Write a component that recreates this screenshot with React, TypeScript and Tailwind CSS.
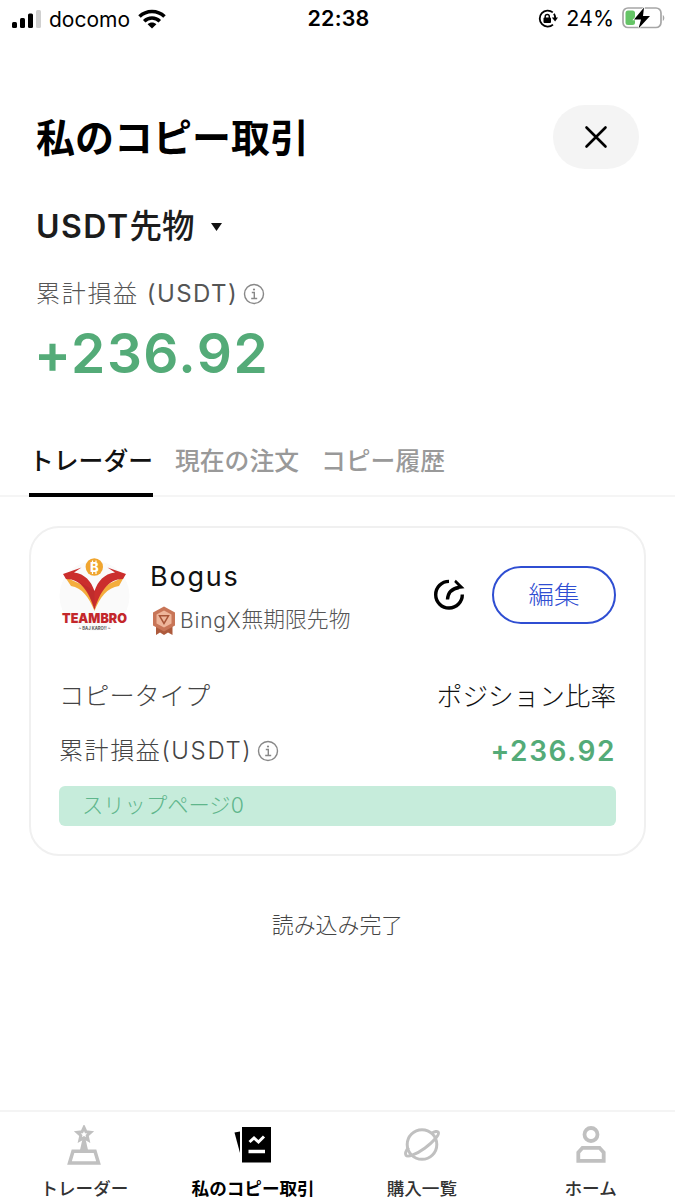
import type { ReactNode } from 'react';

const navItems = [
  { label: 'トレーダー', icon: TrophyIcon, active: false },
  { label: '私のコピー取引', icon: CardsIcon, active: true },
  { label: '購入一覧', icon: PlanetIcon, active: false },
  { label: 'ホーム', icon: UserIcon, active: false },
];

export default function App() {
  return (
    <div className="flex h-[1200px] w-[675px] flex-col overflow-hidden bg-white font-['Inter','Noto_Sans_CJK_JP',sans-serif] whitespace-nowrap text-[#111]">
      <StatusBar />

      <header className="mt-[67px] flex h-16 items-center justify-between pr-9 pl-9">
        <h1 className="text-[39px] leading-none font-bold text-black">私のコピー取引</h1>
        <button className="flex h-16 w-[86px] items-center justify-center rounded-full bg-[#f4f4f4]">
          <svg width="24" height="24" viewBox="0 0 24 24" stroke="#000" strokeWidth="2.6" strokeLinecap="round">
            <path d="M2.5 2.5 21.5 21.5M21.5 2.5 2.5 21.5" />
          </svg>
        </button>
      </header>

      <section className="px-9">
        <div className="mt-[33px] flex h-[50px] items-center">
          <span className="text-[32px] leading-none font-semibold tracking-[1.5px] text-[#1c1c1c]">USDT</span>
          <span className="text-[32.5px] leading-none font-medium text-[#1c1c1c]">先物</span>
          <svg className="ml-4" width="11" height="8" viewBox="0 0 11 8">
            <path d="M0 0h11L5.5 8z" fill="#111" />
          </svg>
        </div>
        <div className="mt-[25px] flex h-[34px] items-center text-[24px] leading-none tracking-[1.4px] text-[#555]">
          <span className="font-light tracking-[1.7px]">累計損益</span>
          <span className="ml-2">(USDT)</span>
          <InfoIcon className="ml-[5px]" />
        </div>
        <p className="mt-[11px] -ml-0.5 flex h-[62px] items-center text-[55px] leading-none font-semibold tracking-[1.5px] text-[#54ab78]">+236.92</p>
      </section>

      <nav className="mt-10 flex h-[73px] gap-[22px] border-b-2 border-[#f5f5f5] px-[29px] text-[24.8px] leading-none font-medium text-[#999]">
        <Tab active>トレーダー</Tab>
        <Tab>現在の注文</Tab>
        <Tab>コピー履歴</Tab>
      </nav>

      <TraderCard />

      <p className="mt-[54px] flex h-8 items-center justify-center text-[21.9px] leading-none font-light text-[#444]">読み込み完了</p>

      <footer className="mt-auto flex h-[90px] border-t-2 border-[#f4f4f4]">
        {navItems.map(({ label, icon: Icon, active }) => (
          <div key={label} className="flex flex-1 flex-col items-center pt-[13px]">
            <Icon />
            <span className={`mt-[15px] text-[17.6px] leading-none ${active ? 'font-bold text-black' : 'font-medium text-[#333]'}`}>{label}</span>
          </div>
        ))}
      </footer>
    </div>
  );
}

function StatusBar() {
  return (
    <div className="grid h-[38px] grid-cols-3 items-center pr-2.5 pl-3 text-[21.5px] leading-none text-black">
      <div className="flex items-center">
        <svg width="30" height="20" viewBox="0 0 30 20">
          <rect x="0" y="13" width="5" height="6" rx="1.5" />
          <rect x="8" y="9" width="5" height="10" rx="1.5" />
          <rect x="16" y="4.5" width="5" height="14.5" rx="1.5" />
          <rect x="24" y="1" width="5" height="18" rx="1.5" fill="#d0d0d0" />
        </svg>
        <span className="ml-[7px] text-[21px]">docomo</span>
        <svg className="ml-2" width="28" height="20" viewBox="0 0 28 20" fill="none" stroke="#000" strokeWidth="3.6">
          <path d="M1.5 7.5C8.5.8 19.5.8 26.5 7.5M6.2 12.2c4.500-4.200 11.100-4.200 15.600 0" />
          <path d="M14 19.500 9.600 15.200c2.500-2.300 6.300-2.300 8.800 0z" fill="#000" stroke="none" />
        </svg>
      </div>
      <span className="text-center font-semibold tracking-[0.2px]">22:38</span>
      <div className="flex items-center justify-end">
        <svg width="20" height="20" viewBox="0 0 20 20" fill="none" stroke="#000">
          <path d="M14.800 3.400A8 8 0 1 0 15 15.600M16 4.800a8 8 0 0 1 1.200 5" strokeWidth="1.800" />
          <path d="M13.800 8.500h6.200l-2.900 4z" fill="#000" stroke="none" />
          <rect x="5.500" y="8.500" width="7.500" height="5.500" rx="1" fill="#000" stroke="none" />
          <path d="M7.200 9V7.500a2 2 0 0 1 4.100 0V9" strokeWidth="1.400" />
        </svg>
        <span className="ml-2">24%</span>
        <svg className="ml-2" width="43" height="24" viewBox="0 0 43 24">
          <rect x="1" y="1" width="38" height="19.500" rx="5" fill="none" stroke="#a6a6a6" strokeWidth="1.700" />
          <path d="M40.800 8v6c2-.7 2-5.300 0-6z" fill="#a6a6a6" />
          <rect x="3.500" y="3.500" width="9.500" height="14.500" rx="2.500" fill="#65c466" />
          <path d="M22 .500 12 12.500h7L16.500 21.500 28 9h-7z" fill="#000" stroke="#fff" strokeWidth="1.500" paintOrder="stroke" />
        </svg>
      </div>
    </div>
  );
}

function Tab({ active, children }: { active?: boolean; children: ReactNode }) {
  return (
    <button className={`-mb-0.5 flex flex-col justify-between pt-[25px] ${active ? 'text-[#111]' : ''}`}>
      <span>{children}</span>
      {active && <span className="h-1 w-full bg-black" />}
    </button>
  );
}

function TraderCard() {
  return (
    <section className="mx-[29px] mt-[29px] h-[330px] rounded-[30px] border-2 border-[#f0f0f0] px-7">
      <div className="mt-[29px] flex h-[76px] items-center">
        <Avatar />
        <div className="mt-[7px] ml-5 flex flex-col">
          <span className="text-[27px] leading-none tracking-[1.8px]">Bogus</span>
          <span className="mt-4 flex h-7 items-center text-[#555]">
            <BadgeIcon />
            <span className="ml-1 text-[21px] leading-none font-light tracking-[0.8px]">BingX</span>
            <span className="text-[21.8px] leading-none font-light">無期限先物</span>
          </span>
        </div>
        <svg className="ml-auto" width="32" height="32" viewBox="0 0 32 32" fill="none" stroke="#000" strokeWidth="3.4">
          <path d="M16 2.400A13.300 13.300 0 1 0 29.300 15.500" />
          <path d="M14.500 20.500C15 13.500 19 9.500 26 8.500" />
          <path d="M22.800.8 31.500 9.200 23 10.200 25 7 21.200 3z" fill="#000" stroke="none" />
        </svg>
        <button className="ml-[27px] flex h-[58px] w-[124px] items-center justify-center rounded-full border-2 border-[#2f4ed2] text-[25.5px] leading-none font-light text-[#2f4ed2]">編集</button>
      </div>

      <div className="mt-[47px] flex h-[34px] items-center justify-between text-[25.2px] leading-none font-light">
        <span className="text-[#444]">コピータイプ</span>
        <span className="text-[25.6px]">ポジション比率</span>
      </div>
      <div className="mt-5 flex h-[34px] items-center text-[24px] leading-none text-[#444]">
        <span className="font-light tracking-[1.6px]">累計損益(USDT)</span>
        <InfoIcon className="ml-[5px]" />
        <span className="ml-auto text-[28px] font-semibold tracking-[1.6px] text-[#54ab78]">+236.92</span>
      </div>
      <div className="mt-[18px] flex h-10 items-center rounded-md bg-[#c6ecdb] pl-[23px] text-[21.3px] leading-none font-light text-[#5fb68c]">スリップページ0</div>
    </section>
  );
}

function InfoIcon({ className = '' }: { className?: string }) {
  return (
    <svg className={className} width="22" height="22" viewBox="0 0 22 22" fill="none" stroke="#888" strokeWidth="1.4">
      <circle cx="11" cy="11" r="9.5" />
      <path d="M8.800 9.500h2.500v6M8.200 15.500h6" />
      <circle cx="11" cy="6.500" r="1.100" fill="#888" stroke="none" />
    </svg>
  );
}

function Avatar() {
  return (
    <svg width="71" height="76" viewBox="0 0 71 76">
      <circle cx="35.500" cy="39" r="35" fill="#fafafa" />
      <path d="M6 20 17 25C26 28 33 38 35.500 53 38 38 45 28 54 25L65 20 60 29C48 31 41 40 35.500 54 30 40 23 31 12 29z" fill="#f4ad3d" />
      <path d="M4 17 22.500 10.500 15 15.500C26 17 32 24 35.500 34 39 24 45 17 56 15.500L48.500 10.500 67 17 64 22C49 22 41 35 35.500 53 30 35 22 22 7 22z" fill="#cb2e2d" />
      <path d="M35.500 34v18C32 39 28 31 20 25z" fill="#a9272b" opacity="0.35" />
      <circle cx="35.300" cy="10" r="8.700" fill="#f0a52f" />
      <text x="35.300" y="15" textAnchor="middle" fontSize="13" fontWeight="800" fill="#fff">B</text>
      <path d="M33.500 3.500v2M37 3.500v2M33.500 15v2M37 15v2" stroke="#fff" strokeWidth="1.200" />
      <text x="35.500" y="66" textAnchor="middle" fontSize="13.500" fontWeight="900" fill="#c3272b" textLength="65" lengthAdjust="spacingAndGlyphs">TEAMBRO</text>
      <text x="35.500" y="73" textAnchor="middle" fontSize="5" fontWeight="700" fill="#555" textLength="32" lengthAdjust="spacingAndGlyphs">~ BAJ KARO!! ~</text>
    </svg>
  );
}

function BadgeIcon() {
  return (
    <svg className="ml-0.5" width="24" height="29" viewBox="0 0 24 29">
      <path d="M4 17v12l4-2.500L12 29l4-2.500 4.500 2.500V17z" fill="#ad5a3c" />
      <path d="M12 .5 23 6.500v13L12 25.500 1 19.500v-13z" fill="#c87557" />
      <path d="M12 4.500 19.500 8.500v9L12 21.500 4.500 17.500v-9z" fill="#eeb59a" />
      <path d="M7.500 9.800h9L12 17.500z" fill="none" stroke="#a75538" strokeWidth="1.500" />
    </svg>
  );
}

function TrophyIcon() {
  return (
    <svg width="40" height="40" viewBox="0 0 40 40" fill="none" stroke="#c0c0c0" strokeWidth="3">
      <path d="m20 2.500 2 4.300 4.700.5-3.500 3.200 1 4.600-4.200-2.400-4.200 2.400 1-4.600-3.500-3.200 4.700-.5z" />
      <path d="M18.500 14h3l2.500 11h-8z" fill="#c0c0c0" stroke="none" />
      <path d="M9 26.300h22l3.500 11.700h-29z" strokeWidth="3.500" />
    </svg>
  );
}

function CardsIcon() {
  return (
    <svg width="40" height="40" viewBox="0 0 40 40">
      <path d="M1.500 7.500 7 6.500v21.500z" fill="#000" />
      <path d="M9 2h29v35.500H9z" fill="#000" />
      <path d="m16.500 17 4.500-4 4.500 4 5.500-5.500" fill="none" stroke="#fff" strokeWidth="3" />
      <path d="M15.500 26.500h16.500" stroke="#fff" strokeWidth="3.500" />
    </svg>
  );
}

function PlanetIcon() {
  return (
    <svg width="40" height="40" viewBox="0 0 40 40" fill="none" stroke="#c0c0c0" strokeWidth="3">
      <circle cx="20" cy="19.500" r="14.800" />
      <path d="M29.500 8.500c3-2 6-2.700 6.800-1.300 1.400 2.400-5 9.800-13.600 16S5.700 32.600 4 30.300C3 28.900 3.700 26 6.500 22.500" />
    </svg>
  );
}

function UserIcon() {
  return (
    <svg width="40" height="40" viewBox="0 0 40 40" fill="none" stroke="#c0c0c0" strokeWidth="3.8">
      <circle cx="20" cy="9.500" r="6.500" />
      <path d="M7.300 35.800V27.500l4.200-4.700h17l4.200 4.700v8.300z" />
    </svg>
  );
}
